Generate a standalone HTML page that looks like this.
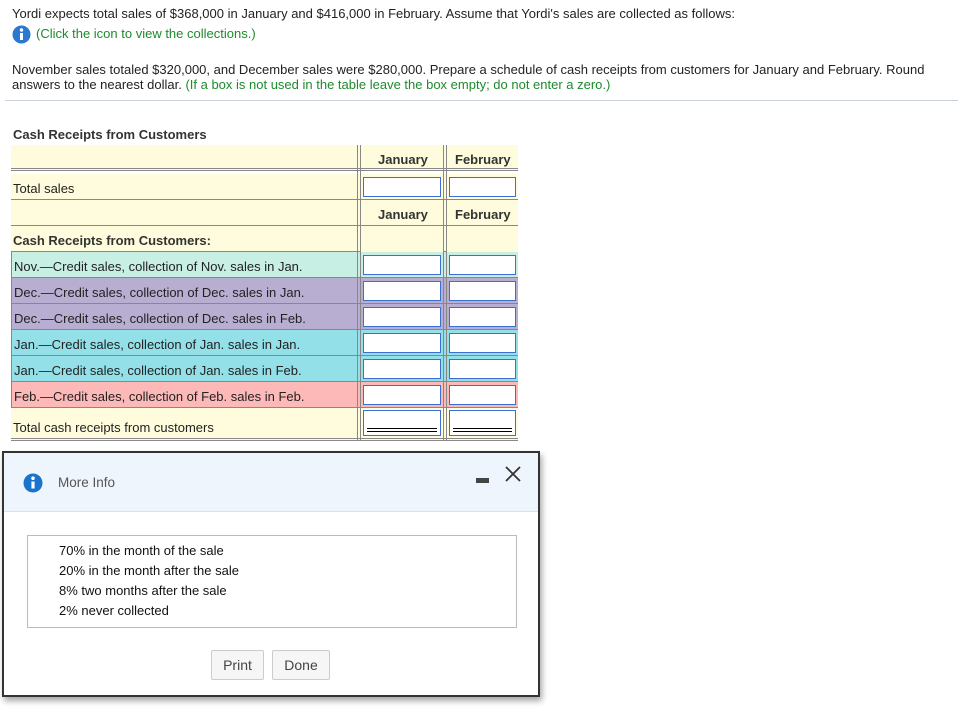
<!DOCTYPE html><html><head><meta charset="utf-8"><style>
body{margin:0;width:958px;height:716px;background:#fff;font-family:"Liberation Sans",Arial,sans-serif;font-size:13px;color:#222;position:relative;overflow:hidden}
.a{position:absolute;white-space:nowrap}
.g{color:#1e8a2e}
.row{position:absolute;left:11px;width:507px;border-bottom:1px solid #888;box-sizing:border-box}
.inp{position:absolute;height:20px;background:#fff;border:1px solid #3b6fd1;box-sizing:border-box}
.vl{position:absolute;width:1px;background:#888;top:145px;height:295px}
.hd{position:absolute;font-weight:bold;font-size:13px;color:#333}
</style></head><body>
<div class="a" style="left:12px;top:6px">Yordi expects total sales of $368,000 in January and $416,000 in February. Assume that Yordi's sales are collected as follows:</div>
<svg class="a" style="left:12px;top:25px" width="19" height="19"><circle cx="9.5" cy="9.5" r="9" fill="#2b78d0"/><rect x="8" y="8" width="3" height="7" fill="#fff"/><circle cx="9.5" cy="5" r="1.7" fill="#fff"/></svg>
<div class="a g" style="left:36px;top:26px">(Click the icon to view the collections.)</div>
<div class="a" style="left:12px;top:62px">November sales totaled $320,000, and December sales were $280,000. Prepare a schedule of cash receipts from customers for January and February. Round</div>
<div class="a" style="left:12px;top:77px">answers to the nearest dollar. <span class="g">(If a box is not used in the table leave the box empty; do not enter a zero.)</span></div>
<div class="a" style="left:5px;top:100px;width:953px;height:1px;background:#c8d0dc"></div>
<div class="a" style="left:13px;top:127px;font-weight:bold;color:#333">Cash Receipts from Customers</div>

<div class="row" style="top:145px;height:26px;background:#fefcdc;border-bottom:3px double #888"></div>
<div class="row" style="top:174px;height:26px;background:#fefcdc"></div>
<div class="row" style="top:200px;height:26px;background:#fefcdc"></div>
<div class="row" style="top:226px;height:26px;background:#fefcdc"></div>
<div class="row" style="top:252px;height:26px;background:#c8efe3"></div>
<div class="row" style="top:278px;height:26px;background:#b8aed2"></div>
<div class="row" style="top:304px;height:26px;background:#b8aed2"></div>
<div class="row" style="top:330px;height:26px;background:#93e0e8"></div>
<div class="row" style="top:356px;height:26px;background:#93e0e8"></div>
<div class="row" style="top:382px;height:26px;background:#fdb8b8"></div>
<div class="row" style="top:408px;height:33px;background:#fefcdc;border-bottom:3px double #888"></div>
<div class="a" style="left:11px;top:252px;width:1px;height:156px;background:#888"></div>
<div class="vl" style="left:357px"></div><div class="vl" style="left:360px"></div>
<div class="vl" style="left:443px"></div><div class="vl" style="left:446px"></div>
<div class="a" style="left:361px;top:226px;width:82px;height:26px;background:#fefcdc"></div>
<div class="a" style="left:447px;top:226px;width:71px;height:26px;background:#fefcdc"></div>

<div class="hd" style="left:378px;top:152px">January</div><div class="hd" style="left:455px;top:152px">February</div>
<div class="hd" style="left:378px;top:207px">January</div><div class="hd" style="left:455px;top:207px">February</div>
<div class="a" style="left:13px;top:181px">Total sales</div>
<div class="a hd" style="left:13px;top:233px">Cash Receipts from Customers:</div>
<div class="a" style="left:14px;top:259px">Nov.—Credit sales, collection of Nov. sales in Jan.</div>
<div class="a" style="left:14px;top:285px">Dec.—Credit sales, collection of Dec. sales in Jan.</div>
<div class="a" style="left:14px;top:311px">Dec.—Credit sales, collection of Dec. sales in Feb.</div>
<div class="a" style="left:14px;top:337px">Jan.—Credit sales, collection of Jan. sales in Jan.</div>
<div class="a" style="left:14px;top:363px">Jan.—Credit sales, collection of Jan. sales in Feb.</div>
<div class="a" style="left:14px;top:389px">Feb.—Credit sales, collection of Feb. sales in Feb.</div>
<div class="a" style="left:13px;top:420px">Total cash receipts from customers</div>

<div class="inp" style="left:363px;top:177px;width:78px"></div><div class="inp" style="left:449px;top:177px;width:67px"></div>
<div class="inp" style="left:363px;top:255px;width:78px"></div><div class="inp" style="left:449px;top:255px;width:67px"></div>
<div class="inp" style="left:363px;top:281px;width:78px"></div><div class="inp" style="left:449px;top:281px;width:67px"></div>
<div class="inp" style="left:363px;top:307px;width:78px"></div><div class="inp" style="left:449px;top:307px;width:67px"></div>
<div class="inp" style="left:363px;top:333px;width:78px"></div><div class="inp" style="left:449px;top:333px;width:67px"></div>
<div class="inp" style="left:363px;top:359px;width:78px"></div><div class="inp" style="left:449px;top:359px;width:67px"></div>
<div class="inp" style="left:363px;top:385px;width:78px"></div><div class="inp" style="left:449px;top:385px;width:67px"></div>
<div class="inp" style="left:363px;top:410px;width:78px;height:26px"><div style="position:absolute;left:3px;right:3px;top:17px;border-top:1px solid #000;border-bottom:1px solid #000;height:2px"></div></div>
<div class="inp" style="left:449px;top:410px;width:67px;height:26px"><div style="position:absolute;left:3px;right:3px;top:17px;border-top:1px solid #000;border-bottom:1px solid #000;height:2px"></div></div>

<div class="a" style="left:2px;top:451px;width:534px;height:242px;border:2px solid #333;background:#fff;box-shadow:2px 4px 6px rgba(0,0,0,.35)">
 <div style="position:absolute;left:0;top:0;right:0;height:58px;background:#eff5fd;border-bottom:1px solid #d5e3f0"></div>
 <svg style="position:absolute;left:19px;top:20px" width="20" height="20"><circle cx="10" cy="10" r="9.5" fill="#1b74cc"/><rect x="8.4" y="8.5" width="3.2" height="7" fill="#fff"/><circle cx="10" cy="5.2" r="1.8" fill="#fff"/></svg>
 <div class="a" style="left:54px;top:22px;font-size:13.5px;color:#555">More Info</div>
 <div style="position:absolute;left:472px;top:25px;width:13px;height:5px;background:#444"></div>
 <svg style="position:absolute;left:500px;top:12px" width="18" height="18"><path d="M2 2L16 16M16 2L2 16" stroke="#333" stroke-width="1.8"/></svg>
 <div style="position:absolute;left:23px;top:82px;width:490px;height:93px;border:1px solid #bbb;box-sizing:border-box"></div>
 <div class="a" style="left:55px;top:90px;color:#111">70% in the month of the sale</div>
 <div class="a" style="left:55px;top:110px;color:#111">20% in the month after the sale</div>
 <div class="a" style="left:55px;top:130px;color:#111">8% two months after the sale</div>
 <div class="a" style="left:55px;top:150px;color:#111">2% never collected</div>
 <div class="a" style="left:207px;top:197px;width:53px;height:30px;border:1px solid #ccc;border-radius:2px;background:#f6f6f6;box-sizing:border-box;text-align:center;line-height:28px;font-size:14px;color:#444">Print</div>
 <div class="a" style="left:268px;top:197px;width:58px;height:30px;border:1px solid #ccc;border-radius:2px;background:#f6f6f6;box-sizing:border-box;text-align:center;line-height:28px;font-size:14px;color:#444">Done</div>
</div>
</body></html>
